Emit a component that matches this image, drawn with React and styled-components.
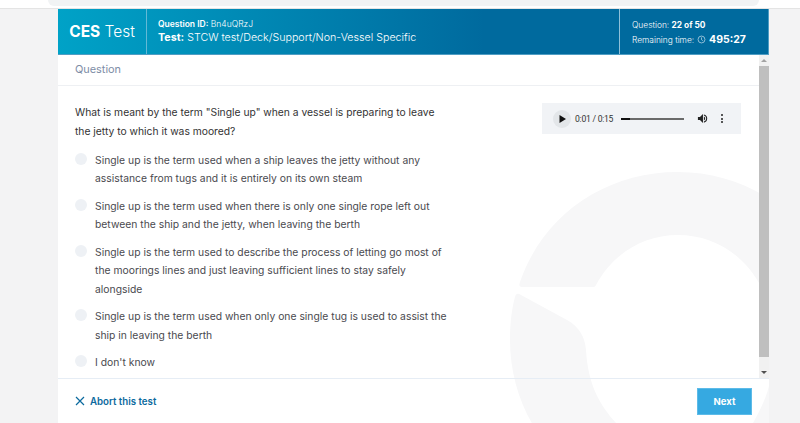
import React from 'react';
import styled, { createGlobalStyle } from 'styled-components';

const GlobalStyle = createGlobalStyle`
  html, body {
    margin: 0;
    height: 100%;
    overflow: hidden;
    background: #f3f3f4;
  }
  * {
    box-sizing: border-box;
  }
`;

const options = [
  [
    'Single up is the term used when a ship leaves the jetty without any',
    'assistance from tugs and it is entirely on its own steam',
  ],
  [
    'Single up is the term used when there is only one single rope left out',
    'between the ship and the jetty, when leaving the berth',
  ],
  [
    'Single up is the term used to describe the process of letting go most of',
    'the moorings lines and just leaving sufficient lines to stay safely',
    'alongside',
  ],
  [
    'Single up is the term used when only one single tug is used to assist the',
    'ship in leaving the berth',
  ],
  ["I don't know"],
];

function App() {
  return (
    <Page>
      <GlobalStyle />
      <BrowserStrip>
        <SearchBar />
      </BrowserStrip>
      <Card>
        <Watermark viewBox="500 160 340 272">
          {/* logo ring, traced in page coordinates */}
          <path d="M520 282C543 215 605 172 678 172C771 172 846 247 846 340C846 433 771 508 678 508C585 508 510 433 510 340C510 322 512 308 515 297C516 293 518 293 521 295L567 320C580 327 585 338 586 350C588 385 600 405 616 423C640 448 670 455 690 450C720 447 745 437 753 423C760 410 769 395 772 370C778 330 772 305 759 283C742 253 712 235 678 235C642 235 612 255 596 285C595 287 594 287 592 287L522 287C519 287 519 285 520 282Z" />
        </Watermark>
        <Header>
          <Brand>
            <b>CES</b>&nbsp;Test
          </Brand>
          <TestInfo>
            <QuestionId>
              <b>Question ID:</b> Bn4uQRzJ
            </QuestionId>
            <TestName>
              <b>Test:</b> STCW test/Deck/Support/Non-Vessel Specific
            </TestName>
          </TestInfo>
          <Progress>
            <ProgressRow>
              Question:&nbsp;<b>22 of 50</b>
            </ProgressRow>
            <ProgressRow>
              Remaining time:
              <ClockIcon viewBox="0 0 12 12">
                <circle cx="6" cy="6" r="4.6" />
                <path d="M6 3.2V6.2L7.8 7.6" />
              </ClockIcon>
              <Timer>495:27</Timer>
            </ProgressRow>
          </Progress>
        </Header>
        <Middle>
          <ScrollArea>
            <SectionTitle>Question</SectionTitle>
            <Content>
              <QuestionColumn>
                <QuestionText>
                  What is meant by the term "Single up" when a vessel is preparing to leave
                  <br />
                  the jetty to which it was moored?
                </QuestionText>
                <OptionList>
                  {options.map((lines) => (
                    <Option key={lines[0]}>
                      <Radio />
                      <OptionText>
                        {lines.map((line) => (
                          <span key={line}>{line}</span>
                        ))}
                      </OptionText>
                    </Option>
                  ))}
                </OptionList>
              </QuestionColumn>
              <AudioPlayer>
                <PlayButton>
                  <svg width="7" height="8" viewBox="0 0 7 8">
                    <path d="M0.5 0L7 4L0.5 8Z" fill="#111" />
                  </svg>
                </PlayButton>
                <AudioTime>0:01 / 0:15</AudioTime>
                <AudioTrack>
                  <AudioProgress style={{ width: `${(1 / 7) * 100}%` }} />
                </AudioTrack>
                <VolumeIcon viewBox="0 0 24 24">
                  <path d="M2 8.5v7h4.5L13 22V2L6.5 8.5H2z" />
                  <path d="M15 3v2.6a6.6 6.6 0 0 1 0 12.8V21a9.2 9.2 0 0 0 0-18z" />
                  <path d="M15 7.5v9a5 5 0 0 0 0-9z" />
                </VolumeIcon>
                <MenuDots>
                  <i />
                  <i />
                  <i />
                </MenuDots>
              </AudioPlayer>
            </Content>
          </ScrollArea>
          <ScrollTrack>
            <ScrollButton>
              <UpArrow />
            </ScrollButton>
            <ScrollThumb />
            <ScrollButton>
              <DownArrow />
            </ScrollButton>
          </ScrollTrack>
        </Middle>
        <Footer>
          <AbortLink>
            <svg width="10" height="10" viewBox="0 0 10 10">
              <path d="M1 1L9 9M9 1L1 9" stroke="#0b6a9e" strokeWidth="1.2" fill="none" />
            </svg>
            Abort this test
          </AbortLink>
          <NextButton>Next</NextButton>
        </Footer>
      </Card>
    </Page>
  );
}

const Page = styled.div`
  width: 800px;
  height: 423px;
  display: flex;
  flex-direction: column;
  overflow: hidden;
  background: #f3f3f4;
`;

const BrowserStrip = styled.div`
  height: 9px;
  flex: none;
  padding-left: 48px;
  padding-right: 41px;
  background: #fff;
  border-bottom: 1px solid #e4e4e4;
`;

const SearchBar = styled.div`
  height: 6px;
  background: #f1f3f4;
  border-radius: 0 0 10px 10px;
`;

const Card = styled.div`
  width: 711px;
  margin-left: 58px;
  flex: 1;
  min-height: 0;
  display: flex;
  flex-direction: column;
  background: #fff;
  position: relative;
  overflow: hidden;
`;

const Watermark = styled.svg`
  position: absolute;
  left: 442px;
  top: 151px;
  width: 340px;
  height: 272px;
  fill: #f7f7f8;
`;

const Header = styled.div`
  height: 46px;
  flex: none;
  display: flex;
  color: #fff;
  background: linear-gradient(90deg, #00a2c7 0%, #006a9e 60%, #006a9e 100%);
  font-family: Inter, sans-serif;
  border-bottom: 1px solid #4f9dc3;
  border-right: 1px solid #4f9dc3;
  position: relative;
`;

const Brand = styled.div`
  width: 89px;
  flex: none;
  display: flex;
  align-items: center;
  justify-content: center;
  font-size: 15.5px;
  font-weight: 300;
  border-right: 1px solid #63b9d6;

  b {
    font-weight: 700;
  }
`;

const TestInfo = styled.div`
  flex: 1;
  padding: 9px 0 0 11px;
`;

const QuestionId = styled.div`
  font-size: 8.5px;
  line-height: 13px;
  font-weight: 300;

  b {
    font-weight: 600;
  }
`;

const TestName = styled.div`
  font-size: 10.7px;
  line-height: 14px;
  font-weight: 300;

  b {
    font-weight: 700;
  }
`;

const Progress = styled.div`
  width: 149px;
  flex: none;
  padding: 8px 0 0 12px;
  border-left: 1px solid #8fc0d9;
`;

const ProgressRow = styled.div`
  display: flex;
  align-items: center;
  height: 15px;
  font-size: 8.4px;
  font-weight: 300;

  b {
    font-weight: 700;
  }
`;

const ClockIcon = styled.svg`
  width: 9px;
  height: 9px;
  margin: 0 3px;
  fill: none;
  stroke: #cfe3ef;
  stroke-width: 0.9;
`;

const Timer = styled.span`
  font-size: 10.5px;
  font-weight: 700;
`;

const Middle = styled.div`
  flex: 1;
  min-height: 0;
  display: flex;
`;

const ScrollArea = styled.div`
  flex: 1;
  min-width: 0;
  position: relative;
`;

const SectionTitle = styled.div`
  height: 31px;
  padding: 0 0 2px 17px;
  display: flex;
  align-items: center;
  font-family: Inter, sans-serif;
  font-size: 10.9px;
  color: #7d8da6;
  border-bottom: 1px solid #eef0f3;
`;

const Content = styled.div`
  display: flex;
  justify-content: space-between;
  padding: 17px 18px 0 17px;
`;

const QuestionColumn = styled.div`
  width: 400px;
`;

const QuestionText = styled.div`
  font-family: Inter, sans-serif;
  font-size: 10.3px;
  line-height: 18.5px;
  color: #333;
`;

const OptionList = styled.div`
  margin-top: 11px;
  display: flex;
  flex-direction: column;
  gap: 9.33px;
`;

const Option = styled.div`
  display: flex;
  gap: 8px;
`;

const Radio = styled.span`
  width: 12px;
  height: 12px;
  flex: none;
  margin-top: 2px;
  border-radius: 50%;
  background: #eef1f5;
`;

const OptionText = styled.div`
  display: flex;
  flex-direction: column;
  font-family: Inter, sans-serif;
  font-size: 10.35px;
  line-height: 18.33px;
  color: #4a4a4f;
  white-space: nowrap;
`;

const AudioPlayer = styled.div`
  width: 199px;
  height: 31px;
  flex: none;
  display: flex;
  align-items: center;
  padding-left: 11px;
  background: #f1f3f6;
`;

const PlayButton = styled.div`
  width: 18px;
  height: 18px;
  flex: none;
  display: flex;
  align-items: center;
  justify-content: center;
  border-radius: 50%;
  background: #e3e6e9;
`;

const AudioTime = styled.span`
  margin-left: 4px;
  width: 46px;
  flex: none;
  font-family: Roboto, sans-serif;
  font-size: 8.6px;
  letter-spacing: -0.25px;
  white-space: nowrap;
  color: #333;
`;

const AudioTrack = styled.div`
  width: 63px;
  height: 2px;
  flex: none;
  background: #6a6a6a;
`;

const AudioProgress = styled.div`
  height: 100%;
  background: #111;
`;

const VolumeIcon = styled.svg`
  width: 11px;
  height: 11px;
  margin-left: 13px;
  flex: none;
  fill: #222;
`;

const MenuDots = styled.div`
  margin-left: 13px;
  display: flex;
  flex-direction: column;
  gap: 1.5px;

  i {
    width: 2px;
    height: 2px;
    background: #222;
    border-radius: 50%;
  }
`;

const ScrollTrack = styled.div`
  width: 10px;
  flex: none;
  display: flex;
  flex-direction: column;
  background: #f1f1f1;
  position: relative;
`;

const ScrollButton = styled.div`
  height: 11px;
  flex: none;
  display: flex;
  align-items: center;
  justify-content: center;
`;

const UpArrow = styled.span`
  border: 3px solid transparent;
  border-top: 0;
  border-bottom: 3px solid #a3a3a3;
`;

const DownArrow = styled.span`
  border: 3px solid transparent;
  border-bottom: 0;
  border-top: 3px solid #505050;
`;

const ScrollThumb = styled.div`
  flex: 1;
  margin-bottom: 10px;
  background: #bfbfbf;
`;

const Footer = styled.div`
  height: 45px;
  flex: none;
  display: flex;
  align-items: center;
  justify-content: space-between;
  padding: 0 17px;
  border-top: 1px solid #e6edf5;
  position: relative;
`;

const AbortLink = styled.a`
  display: flex;
  align-items: center;
  gap: 5px;
  font-family: Inter, sans-serif;
  font-size: 9.7px;
  font-weight: 600;
  color: #0b6a9e;
`;

const NextButton = styled.button`
  width: 55px;
  height: 27px;
  border: 1px solid #5dbbe8;
  background: #36a9e1;
  color: #fff;
  font-family: Inter, sans-serif;
  font-size: 9.5px;
  font-weight: 700;
`;

export default App;
